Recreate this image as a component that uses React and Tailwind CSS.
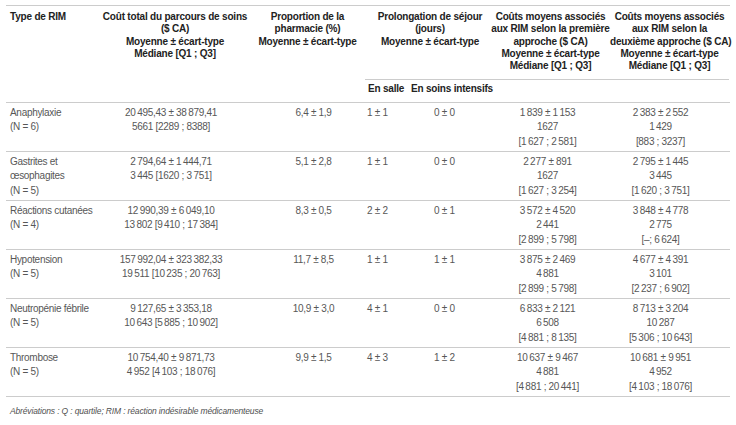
const rows = [
  {
    type: ["Anaphylaxie", "(N = 6)"],
    total: ["20 495,43 ± 38 879,41", "5661 [2289 ; 8388]"],
    pharm: "6,4 ± 1,9",
    salle: "1 ± 1",
    si: "0 ± 0",
    c1: ["1 839 ± 1 153", "1627", "[1 627 ; 2 581]"],
    c2: ["2 383 ± 2 552", "1 429", "[883 ; 3237]"],
  },
  {
    type: ["Gastrites et", "œsophagites", "(N = 5)"],
    total: ["2 794,64 ± 1 444,71", "3 445 [1620 ; 3 751]"],
    pharm: "5,1 ± 2,8",
    salle: "1 ± 1",
    si: "0 ± 0",
    c1: ["2 277 ± 891", "1627", "[1 627 ; 3 254]"],
    c2: ["2 795 ± 1 445", "3 445", "[1 620 ; 3 751]"],
  },
  {
    type: ["Réactions cutanées", "(N = 4)"],
    total: ["12 990,39 ± 6 049,10", "13 802 [9 410 ; 17 384]"],
    pharm: "8,3 ± 0,5",
    salle: "2 ± 2",
    si: "0 ± 1",
    c1: ["3 572 ± 4 520", "2 441", "[2 899 ; 5 798]"],
    c2: ["3 848 ± 4 778", "2 775", "[–; 6 624]"],
  },
  {
    type: ["Hypotension", "(N = 5)"],
    total: ["157 992,04 ± 323 382,33", "19 511 [10 235 ; 20 763]"],
    pharm: "11,7 ± 8,5",
    salle: "1 ± 1",
    si: "1 ± 1",
    c1: ["3 875 ± 2 469", "4 881", "[2 899 ; 5 798]"],
    c2: ["4 677 ± 4 391", "3 101", "[2 237 ; 6 902]"],
  },
  {
    type: ["Neutropénie fébrile", "(N = 5)"],
    total: ["9 127,65 ± 3 353,18", "10 643 [5 885 ; 10 902]"],
    pharm: "10,9 ± 3,0",
    salle: "4 ± 1",
    si: "0 ± 0",
    c1: ["6 833 ± 2 121", "6 508", "[4 881 ; 8 135]"],
    c2: ["8 713 ± 3 204", "10 287", "[5 306 ; 10 643]"],
  },
  {
    type: ["Thrombose", "(N = 5)"],
    total: ["10 754,40 ± 9 871,73", "4 952 [4 103 ; 18 076]"],
    pharm: "9,9 ± 1,5",
    salle: "4 ± 3",
    si: "1 ± 2",
    c1: ["10 637 ± 9 467", "4 881", "[4 881 ; 20 441]"],
    c2: ["10 681 ± 9 951", "4 952", "[4 103 ; 18 076]"],
  },
];

// thin space between thousands
const fmt = (s) => s.replace(/(\d) (\d)/g, "$1\u2009$2");

const cols = "grid grid-cols-[94px_150px_115px_43px_87px_115px_119px]";

function Lines({ items }) {
  return items.map((t, k) => <div key={k}>{fmt(t)}</div>);
}

export default function App() {
  return (
    <div className="bg-white w-[736px] h-[425px] pt-[5px] px-[6px] font-['Liberation_Sans',Arial,sans-serif]">
      <div className="border-t border-[#cccccc]">
        {/* header */}
        <div className={`${cols} border-b border-[#cccccc] text-[10px] font-bold text-[#222] leading-[12.3px] tracking-[-0.2px]`}>
          <div className="row-span-2 pt-[5px] pl-[4px]">Type de RIM</div>
          <div className="row-span-2 pt-[5px] text-center">
            Coût total du parcours de soins
            <br />($ CA)
            <br />Moyenne ± écart-type
            <br />Médiane [Q1 ; Q3]
          </div>
          <div className="row-span-2 pt-[5px] text-center">
            Proportion de la
            <br />pharmacie (%)
            <br />Moyenne ± écart-type
          </div>
          <div className="col-span-2 pt-[5px] h-[74px] text-center border-b border-[#cccccc]">
            Prolongation de séjour
            <br />(jours)
            <br />Moyenne ± écart-type
          </div>
          <div className="pt-[5px] text-center border-b border-[#cccccc] whitespace-nowrap -ml-[4px]">
            Coûts moyens associés
            <br />aux RIM selon la première
            <br />approche ($ CA)
            <br />Moyenne ± écart-type
            <br />Médiane [Q1 ; Q3]
          </div>
          <div className="pt-[5px] text-center border-b border-[#cccccc] whitespace-nowrap">
            Coûts moyens associés
            <br />aux RIM selon la
            <br />deuxième approche ($ CA)
            <br />Moyenne ± écart-type
            <br />Médiane [Q1 ; Q3]
          </div>
          <div className="col-start-4 pt-[3px] h-[22px] pl-[3px] whitespace-nowrap">En salle</div>
          <div className="col-start-5 pt-[3px] pl-[3px] whitespace-nowrap">En soins intensifs</div>
          <div className="col-start-6"></div>
          <div className="col-start-7"></div>
        </div>

        {/* body */}
        {rows.map((r, i) => (
          <div
            key={i}
            className={`${cols} border-b border-[#cccccc] text-[10px] text-[#575757] leading-[14.3px] tracking-[-0.3px] pt-[3px] pb-[2px] h-[49px]`}
          >
            <div className="pl-[4px] whitespace-nowrap">
              <Lines items={r.type} />
            </div>
            <div className="text-center whitespace-nowrap pr-[8px]">
              <Lines items={r.total} />
            </div>
            <div className="text-center pl-[12px]">{r.pharm}</div>
            <div className="pl-[2px] whitespace-nowrap">{r.salle}</div>
            <div className="pl-[26px] whitespace-nowrap">{r.si}</div>
            <div className="text-center whitespace-nowrap -ml-[10px]">
              <Lines items={r.c1} />
            </div>
            <div className="text-center whitespace-nowrap pr-[18px]">
              <Lines items={r.c2} />
            </div>
          </div>
        ))}

        <div className="pl-[4px] pt-[8px] text-[8.5px] italic text-[#505050] tracking-[-0.15px]">
          Abréviations : Q : quartile; RIM : réaction indésirable médicamenteuse
        </div>
      </div>
    </div>
  );
}
